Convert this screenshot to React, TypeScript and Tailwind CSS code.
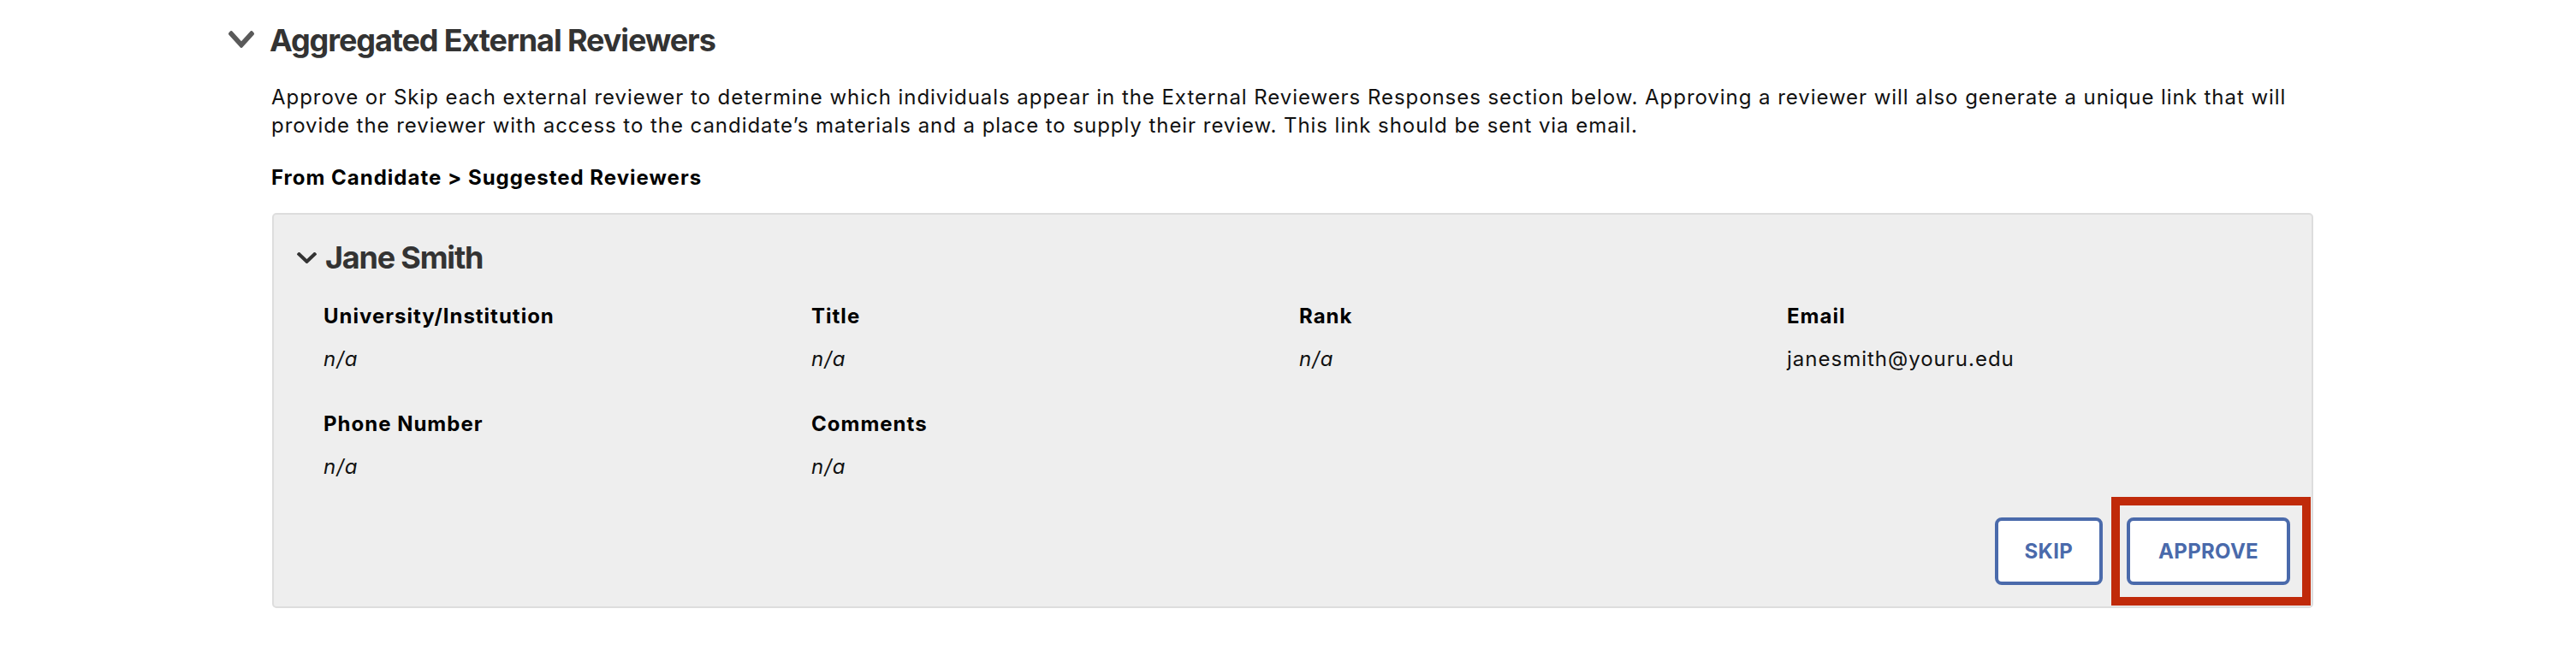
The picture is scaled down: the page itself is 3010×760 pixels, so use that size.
import React from 'react';

const chevronPath =
  'M207.029 381.476L12.686 187.132c-9.373-9.373-9.373-24.569 0-33.941l22.667-22.667c9.357-9.357 24.522-9.375 33.901-.04L224 284.505l154.745-154.021c9.379-9.335 24.544-9.317 33.901.04l22.667 22.667c9.373 9.373 9.373 24.569 0 33.941L240.971 381.476c-9.373 9.372-24.569 9.372-33.942 0z';

function Chevron({ className }: { className?: string }) {
  return (
    <svg viewBox="6 124 436 264" preserveAspectRatio="none" className={className} fill="currentColor">
      <path d={chevronPath} />
    </svg>
  );
}

type Field = { label: string; value: string; italic?: boolean };

const fields: Field[] = [
  { label: 'University/Institution', value: 'n/a', italic: true },
  { label: 'Title', value: 'n/a', italic: true },
  { label: 'Rank', value: 'n/a', italic: true },
  { label: 'Email', value: 'janesmith@youru.edu' },
  { label: 'Phone Number', value: 'n/a', italic: true },
  { label: 'Comments', value: 'n/a', italic: true },
];

export default function App() {
  return (
    <div className="w-[3010px] h-[760px] bg-white font-['Inter','Liberation_Sans',sans-serif] pt-[25px]">
      <div className="pl-[267px]">
        {/* section header */}
        <div className="flex items-center h-[44px]">
          <Chevron className="w-[30px] h-[20px] text-[#5a5a5a] mr-[18px] mt-[-2px]" />
          <h2 className="text-[36px] leading-[44px] font-bold text-[#333] tracking-[-1.1px]">
            Aggregated External Reviewers
          </h2>
        </div>

        <div className="ml-[50px] w-[2387px]">
          <p className="mt-[28px] text-[24px] leading-[33px] tracking-[0.95px] text-[#111]">
            Approve or Skip each external reviewer to determine which individuals appear in the External Reviewers
            Responses section below. Approving a reviewer will also generate a unique link that will provide the
            reviewer with access to the candidate’s materials and a place to supply their review. This link should be
            sent via email.
          </p>

          <h3 className="mt-[28px] text-[24px] leading-[33px] tracking-[1px] font-bold text-black">
            From Candidate &gt; Suggested Reviewers
          </h3>

          {/* reviewer card */}
          <div className="mt-[25px] ml-[1px] w-[2385px] bg-[#eeeeee] border-2 border-[#dddddd] rounded-[5px] pt-[28px] pl-[27px] pr-[25px] pb-[25px]">
            <div className="flex items-center h-[44px]">
              <Chevron className="w-[23px] h-[13px] text-[#333] mr-[10px]" />
              <span className="text-[36px] leading-[44px] font-bold text-[#333] tracking-[-1.2px]">Jane Smith</span>
            </div>

            <div className="mt-[30px] ml-[31px] grid grid-cols-[repeat(4,570px)] gap-y-[43px]">
              {fields.map((f) => (
                <div key={f.label} className="flex flex-col gap-[17px]">
                  <div className="text-[24px] leading-[33px] tracking-[1px] font-bold text-black">{f.label}</div>
                  <div
                    className={
                      f.italic
                        ? 'text-[24px] leading-[33px] tracking-[1px] italic text-[#111]'
                        : 'text-[24px] leading-[33px] tracking-[1px] text-[#111]'
                    }
                  >
                    {f.value}
                  </div>
                </div>
              ))}
            </div>

            <div className="mt-[43px] flex justify-end gap-[28px]">
              <button className="h-[79px] px-[31px] bg-white border-4 border-[#4a6aab] rounded-[8px] text-[24px] font-bold text-[#4a6aab] tracking-[0.3px]">
                SKIP
              </button>
              <div className="relative">
                <button className="h-[79px] px-[33px] bg-white border-4 border-[#4a6aab] rounded-[8px] text-[24px] font-bold text-[#4a6aab] tracking-[0.3px]">
                  APPROVE
                </button>
                <div className="absolute -left-[18px] -right-[24px] -top-[24px] -bottom-[24px] border-[10px] border-[#c02a0a] pointer-events-none" />
              </div>
            </div>
          </div>
        </div>
      </div>
    </div>
  );
}
